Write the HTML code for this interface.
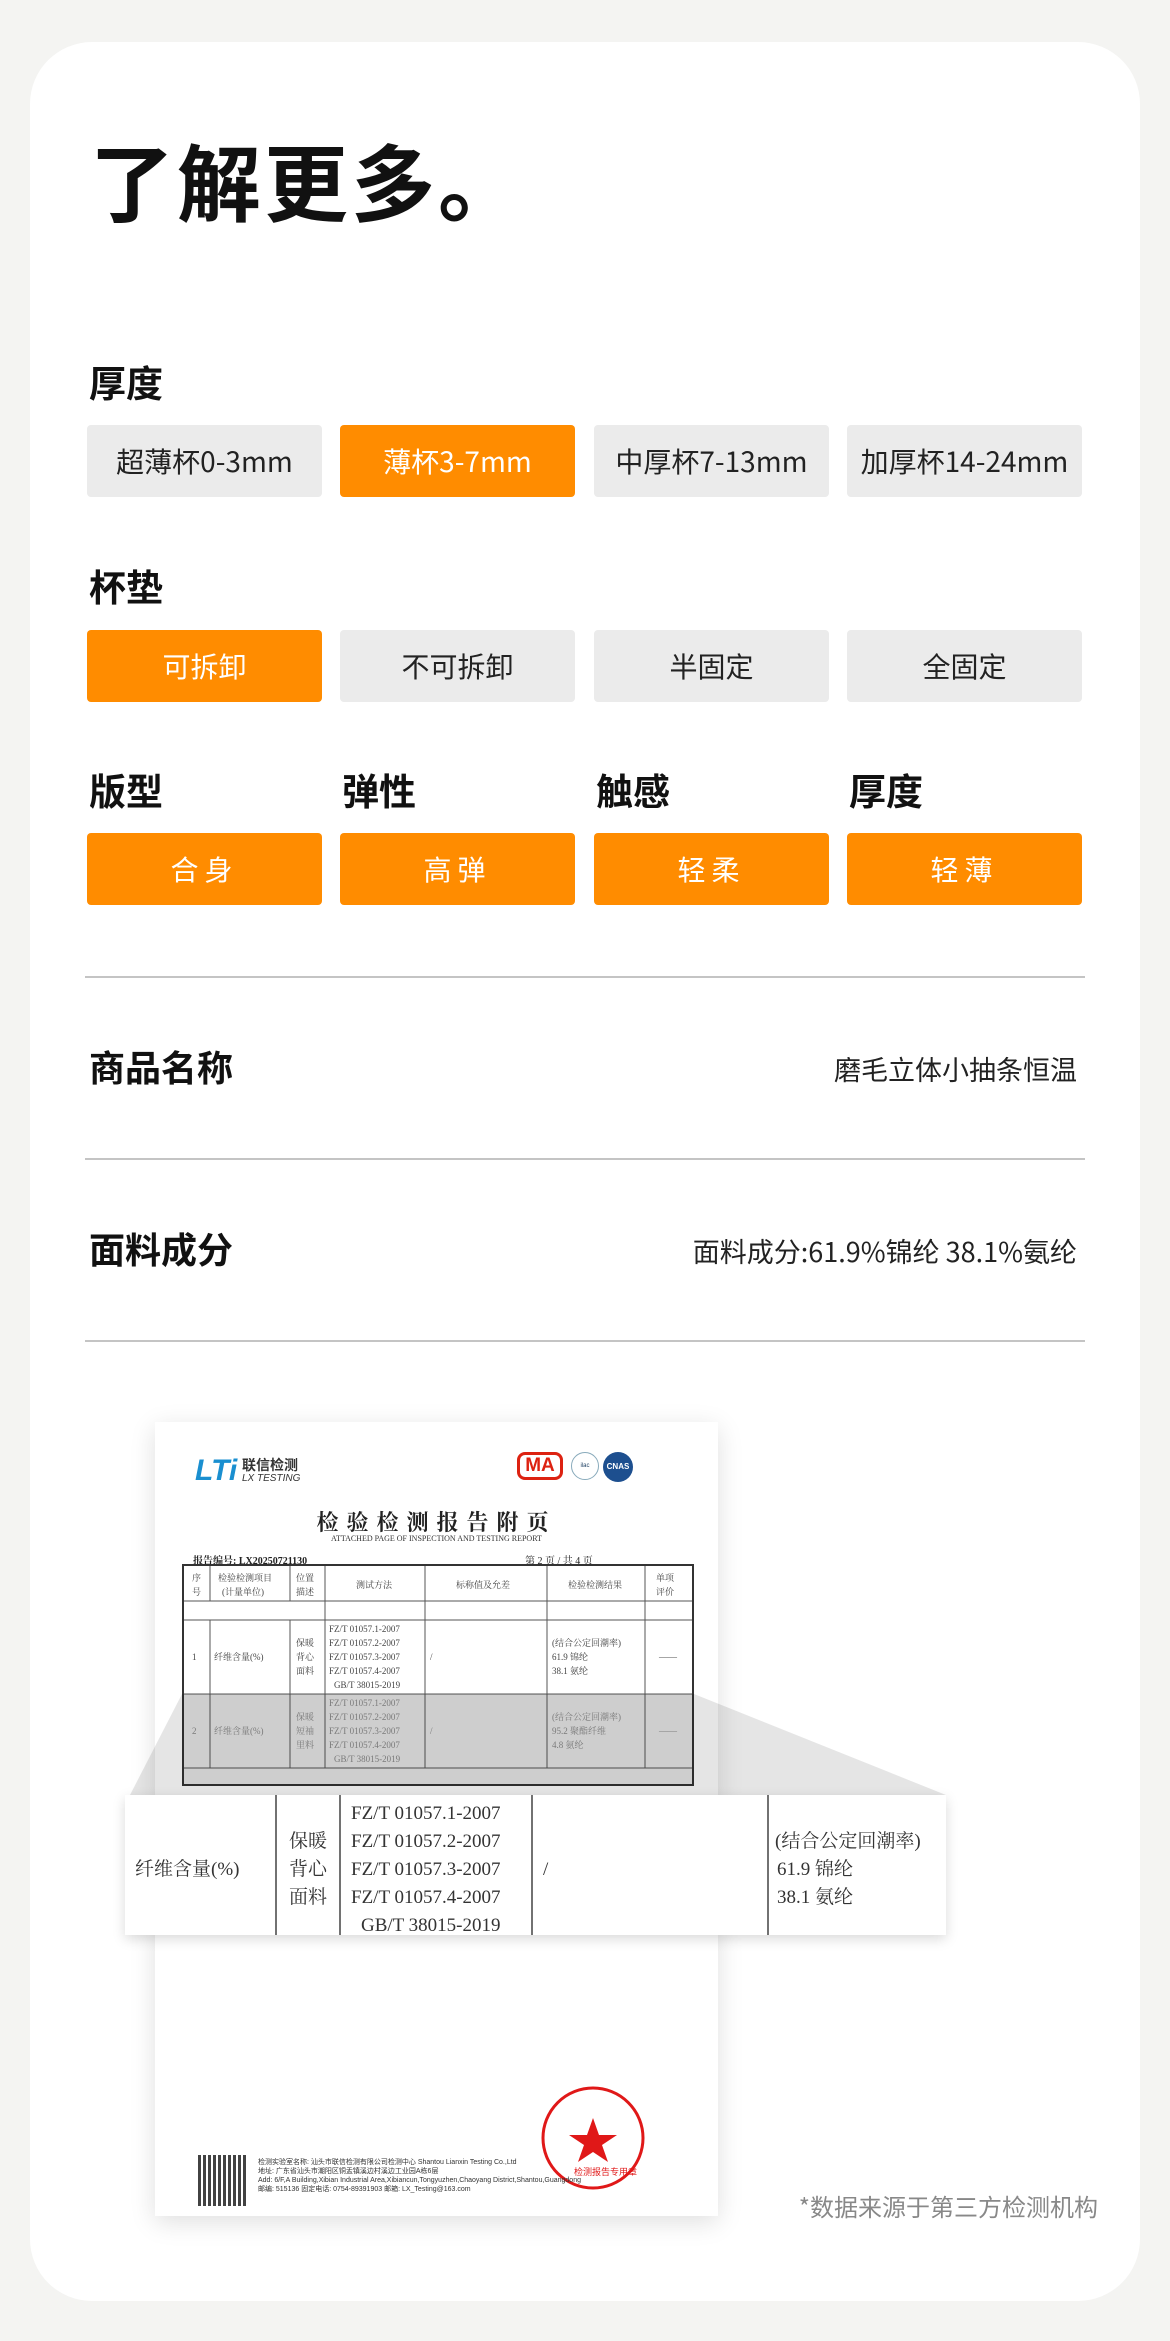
<!DOCTYPE html>
<html><head><meta charset="utf-8"><style>
*{margin:0;padding:0;box-sizing:border-box}
body{width:1170px;height:2341px;background:#f4f4f2;position:relative;font-family:"Liberation Sans","Noto Sans CJK SC",sans-serif;overflow:hidden;color:#111}
.card{position:absolute;left:30px;top:42px;width:1110px;height:2259px;background:#fff;border-radius:62px}
.a{position:absolute}
.t{font-weight:700;font-size:37px;color:#111;line-height:1}
.b{position:absolute;height:72px;width:235px;border-radius:4px;background:#ebebeb;color:#222;font-size:28px;display:flex;align-items:center;justify-content:center;font-family:"Noto Sans CJK SC","Liberation Sans",sans-serif}
.o{background:#ff8c00;color:#fff}
.ln{position:absolute;left:85px;width:1000px;height:2px;background:#c4c4c4}
.doc{position:absolute;left:155px;top:1422px;width:563px;height:794px;background:#fff;box-shadow:0 6px 24px rgba(0,0,0,.13)}
.tb{position:absolute;border:2px solid #333;font-family:"Liberation Serif","Noto Serif CJK SC",serif;color:#444}
.s{font-family:"Liberation Serif","Noto Serif CJK SC",serif}
.r{font-family:"Noto Sans CJK SC","Liberation Sans",sans-serif}
</style></head><body>
<div class="card"></div>
<div class="a" style="left:90px;top:138px;font-size:84px;font-weight:700;line-height:1;letter-spacing:3px;font-family:'Noto Sans CJK SC',sans-serif">了解更多。</div>

<div class="a t" style="left:89px;top:366px">厚度</div>
<div class="b" style="left:87px;top:425px">超薄杯0-3mm</div>
<div class="b o" style="left:340px;top:425px">薄杯3-7mm</div>
<div class="b" style="left:594px;top:425px">中厚杯7-13mm</div>
<div class="b" style="left:847px;top:425px">加厚杯14-24mm</div>

<div class="a t" style="left:89px;top:570px">杯垫</div>
<div class="b o" style="left:87px;top:630px">可拆卸</div>
<div class="b" style="left:340px;top:630px">不可拆卸</div>
<div class="b" style="left:594px;top:630px">半固定</div>
<div class="b" style="left:847px;top:630px">全固定</div>

<div class="a t" style="left:89px;top:774px">版型</div>
<div class="a t" style="left:342px;top:774px">弹性</div>
<div class="a t" style="left:596px;top:774px">触感</div>
<div class="a t" style="left:849px;top:774px">厚度</div>
<div class="b o" style="left:87px;top:833px;letter-spacing:6px">合身</div>
<div class="b o" style="left:340px;top:833px;letter-spacing:6px">高弹</div>
<div class="b o" style="left:594px;top:833px;letter-spacing:6px">轻柔</div>
<div class="b o" style="left:847px;top:833px;letter-spacing:6px">轻薄</div>

<div class="ln" style="top:976px"></div>
<div class="a" style="left:89px;top:1051px;font-size:36px;font-weight:700;line-height:1">商品名称</div>
<div class="a r" style="right:93px;top:1055px;font-size:27px;color:#222;line-height:1">磨毛立体小抽条恒温</div>
<div class="ln" style="top:1158px"></div>
<div class="a" style="left:89px;top:1233px;font-size:36px;font-weight:700;line-height:1">面料成分</div>
<div class="a r" style="right:93px;top:1237px;font-size:27px;color:#222;line-height:1">面料成分:61.9%锦纶 38.1%氨纶</div>
<div class="ln" style="top:1340px"></div>

<div class="doc">
 <div class="a" style="left:40px;top:32px;font-size:30px;font-weight:700;font-style:italic;color:#1a8fd0">LTi</div>
 <div class="a" style="left:87px;top:33px;font-size:14px;font-weight:700;color:#333">联信检测</div>
 <div class="a" style="left:87px;top:51px;font-size:10px;font-style:italic;color:#333">LX TESTING</div>
 <div class="a" style="left:362px;top:30px;width:46px;height:28px;border:3px solid #d21;border-radius:8px;color:#d21;font-size:19px;font-weight:700;text-align:center;line-height:22px">MA</div>
 <div class="a" style="left:416px;top:30px;width:28px;height:28px;border-radius:50%;border:1px solid #8ab;font-size:6px;line-height:26px;text-align:center;color:#246">ilac</div>
 <div class="a" style="left:448px;top:30px;width:30px;height:30px;border-radius:50%;background:#1d4f8f;color:#fff;font-size:8px;font-weight:700;line-height:30px;text-align:center">CNAS</div>
 <div class="a s" style="left:0;width:563px;top:84px;text-align:center;font-size:22px;font-weight:700;letter-spacing:8px;color:#222">检验检测报告附页</div>
 <div class="a s" style="left:0;width:563px;top:112px;text-align:center;font-size:8px;color:#333">ATTACHED PAGE OF INSPECTION AND TESTING REPORT</div>
 <div class="a s" style="left:38px;top:130px;font-size:10px;font-weight:700;color:#222">报告编号: LX20250721130</div>
 <div class="a s" style="left:370px;top:130px;font-size:10px;color:#222">第 2 页 / 共 4 页</div>
</div>
<div class="tb" style="left:182px;top:1564px;width:512px;height:222px">
 <svg width="508" height="218" style="position:absolute;left:0;top:0" font-size="9" fill="#444">
  <rect x="0" y="128" width="508" height="92" fill="#e6e6e6"/>
  <g stroke="#555" stroke-width="1">
   <line x1="0" y1="35" x2="508" y2="35"/><line x1="0" y1="54" x2="508" y2="54"/>
   <line x1="0" y1="128" x2="508" y2="128"/><line x1="0" y1="202" x2="508" y2="202"/>
   <line x1="26" y1="0" x2="26" y2="35"/><line x1="26" y1="54" x2="26" y2="202"/>
   <line x1="106" y1="0" x2="106" y2="35"/><line x1="106" y1="54" x2="106" y2="202"/>
   <line x1="141" y1="0" x2="141" y2="202"/><line x1="241" y1="0" x2="241" y2="202"/>
   <line x1="363" y1="0" x2="363" y2="202"/><line x1="461" y1="0" x2="461" y2="202"/>
  </g>
  <text x="8" y="15">序</text><text x="8" y="29">号</text>
  <text x="34" y="15">检验检测项目</text><text x="38" y="29">(计量单位)</text>
  <text x="112" y="15">位置</text><text x="112" y="29">描述</text>
  <text x="172" y="22">测试方法</text><text x="272" y="22">标称值及允差</text><text x="384" y="22">检验检测结果</text>
  <text x="472" y="15">单项</text><text x="472" y="29">评价</text>
  <g><text x="8" y="94">1</text><text x="30" y="94">纤维含量(%)</text><text x="112" y="80">保暖</text><text x="112" y="94">背心</text><text x="112" y="108">面料</text>
  <text x="145" y="66">FZ/T 01057.1-2007</text><text x="145" y="80">FZ/T 01057.2-2007</text><text x="145" y="94">FZ/T 01057.3-2007</text><text x="145" y="108">FZ/T 01057.4-2007</text><text x="150" y="122">GB/T 38015-2019</text>
  <text x="246" y="94">/</text><text x="368" y="80">(结合公定回潮率)</text><text x="368" y="94">61.9  锦纶</text><text x="368" y="108">38.1  氨纶</text><text x="475" y="94">——</text></g>
  <g fill="#888"><text x="8" y="168">2</text><text x="30" y="168">纤维含量(%)</text><text x="112" y="154">保暖</text><text x="112" y="168">短袖</text><text x="112" y="182">里料</text>
  <text x="145" y="140">FZ/T 01057.1-2007</text><text x="145" y="154">FZ/T 01057.2-2007</text><text x="145" y="168">FZ/T 01057.3-2007</text><text x="145" y="182">FZ/T 01057.4-2007</text><text x="150" y="196">GB/T 38015-2019</text>
  <text x="246" y="168">/</text><text x="368" y="154">(结合公定回潮率)</text><text x="368" y="168">95.2  聚酯纤维</text><text x="368" y="182">4.8  氨纶</text><text x="475" y="168">——</text></g>
 </svg>
</div>
<svg class="a" style="left:0;top:0" width="1170" height="2341"><polygon points="182,1694 130,1795 946,1795 694,1694" fill="rgba(0,0,0,0.1)"/></svg>
<div class="a" style="left:125px;top:1795px;width:821px;height:140px;background:#fff;box-shadow:0 4px 12px rgba(0,0,0,.15)">
 <svg width="821" height="140" style="position:absolute;left:0;top:0" font-family="Liberation Serif,Noto Serif CJK SC,serif" font-size="19" fill="#333">
  <g stroke="#444" stroke-width="1.5"><line x1="151" y1="0" x2="151" y2="140"/><line x1="215" y1="0" x2="215" y2="140"/><line x1="407" y1="0" x2="407" y2="140"/><line x1="643" y1="0" x2="643" y2="140"/></g>
  <text x="10" y="80">纤维含量(%)</text>
  <text x="164" y="52">保暖</text><text x="164" y="80">背心</text><text x="164" y="108">面料</text>
  <text x="226" y="24">FZ/T 01057.1-2007</text><text x="226" y="52">FZ/T 01057.2-2007</text><text x="226" y="80">FZ/T 01057.3-2007</text><text x="226" y="108">FZ/T 01057.4-2007</text><text x="236" y="136">GB/T 38015-2019</text>
  <text x="418" y="80">/</text>
  <text x="650" y="52">(结合公定回潮率)</text><text x="652" y="80">61.9   锦纶</text><text x="652" y="108">38.1   氨纶</text>
 </svg>
</div>
<svg class="a" style="left:530px;top:2085px" width="120" height="120">
 <circle cx="63" cy="53" r="50" fill="none" stroke="#e01818" stroke-width="3"/>
 <polygon points="63,33 69,50 87,50 72,60 78,77 63,67 48,77 54,60 39,50 57,50" fill="#e01818"/>
 <text x="44" y="90" font-size="9" fill="#e01818">检测报告专用章</text>
</svg>
<div class="a" style="left:198px;top:2155px;width:48px;height:51px;background:repeating-linear-gradient(90deg,#222 0 3px,#fff 3px 5px),#222;opacity:.85"></div>
<div class="a" style="left:258px;top:2158px;font-size:7px;line-height:9px;color:#333;white-space:nowrap">检测实验室名称: 汕头市联信检测有限公司检测中心 Shantou Lianxin Testing Co.,Ltd<br>地址: 广东省汕头市潮阳区铜盂镇溪边村溪边工业园A栋6层<br>Add: 6/F,A Building,Xibian Industrial Area,Xibiancun,Tongyuzhen,Chaoyang District,Shantou,Guangdong<br>邮编: 515136 固定电话: 0754-89391903 邮箱: LX_Testing@163.com</div>
<div class="a r" style="right:72px;top:2188px;font-size:24px;color:#888">*数据来源于第三方检测机构</div>
</body></html>
